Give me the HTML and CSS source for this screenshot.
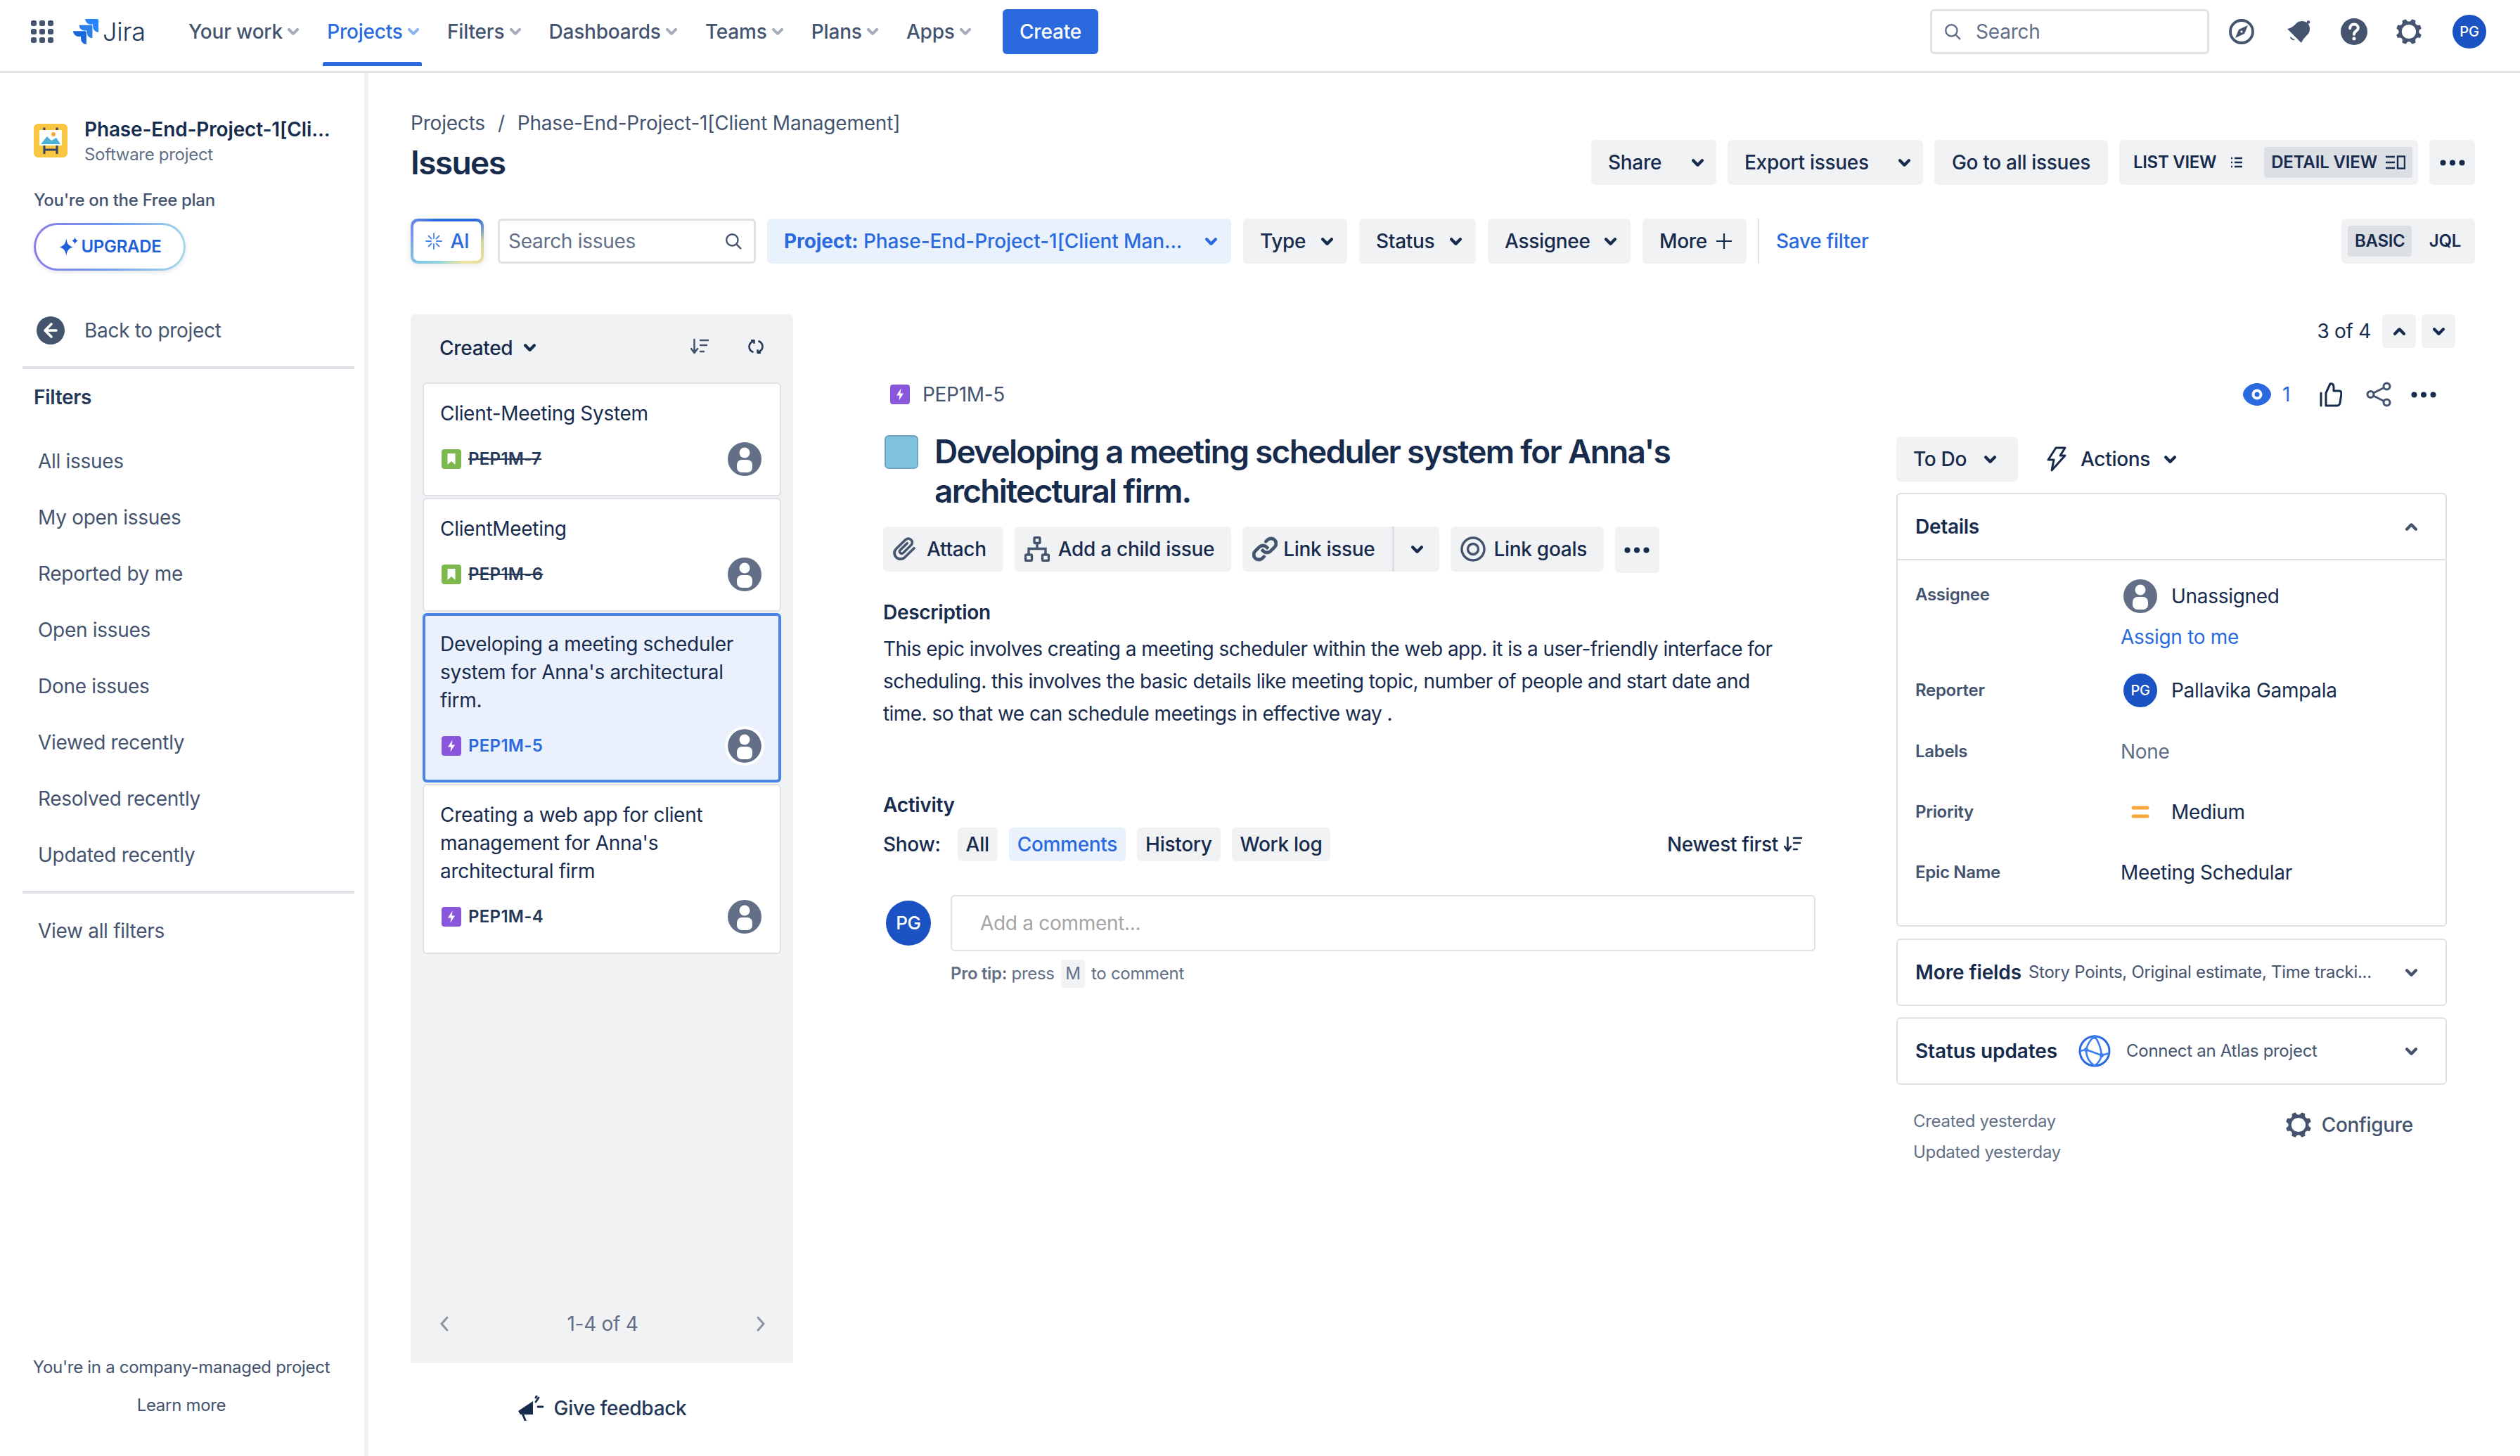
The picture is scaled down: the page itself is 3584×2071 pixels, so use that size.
FILE: index.html
```html
<html>

<head>
    <meta charset="UTF-8">
    <title>Issues - Jira</title>
    <link rel="stylesheet" href="styles.css">
</head>

<body>
    <svg class="defs" width="0" height="0">
        <symbol id="chev" viewBox="8 10 8 5"><path d="M8.292 10.293a1.009 1.009 0 000 1.419l2.939 2.965c.218.215.5.322.779.322s.556-.107.769-.322l2.93-2.955a1.01 1.01 0 000-1.419.987.987 0 00-1.406 0l-2.298 2.317-2.307-2.327a.99.99 0 00-1.406 0z" fill="currentColor"/></symbol>
        <symbol id="dots" viewBox="0 0 36 9"><circle cx="4.5" cy="4.5" r="4" fill="currentColor"/><circle cx="18" cy="4.5" r="4" fill="currentColor"/><circle cx="31.5" cy="4.5" r="4" fill="currentColor"/></symbol>
        <symbol id="person" viewBox="0 0 48 48"><circle cx="24" cy="24" r="24" fill="#626f86"/><circle cx="24" cy="15" r="7.5" fill="#fff"/><rect x="13" y="25" width="22" height="18" rx="7" fill="#fff"/></symbol>
        <symbol id="epic" viewBox="0 0 28 28"><rect width="28" height="28" rx="4" fill="#8a57dc"/><path d="M15.5 5.5 9 15.5h4.5l-1 7 6.5-10h-4.5z" fill="#fff"/></symbol>
        <symbol id="story" viewBox="0 0 28 28"><rect width="28" height="28" rx="4" fill="#7cb84d"/><path d="M8.5 6h11v16l-5.5-5-5.5 5z" fill="#fff"/></symbol>
        <symbol id="gear" viewBox="2.8 2.8 17.8 17.8"><path fill-rule="evenodd" d="M11.701 16.7a5.002 5.002 0 110-10.003 5.002 5.002 0 010 10.004m8.368-3.117a1.995 1.995 0 01-1.346-1.885c0-.876.563-1.613 1.345-1.885a.48.48 0 00.315-.574 8.947 8.947 0 00-.836-1.993.477.477 0 00-.598-.195 2.04 2.04 0 01-1.29.08 1.988 1.988 0 01-1.404-1.395 2.04 2.04 0 01.076-1.297.478.478 0 00-.196-.597 8.98 8.98 0 00-1.975-.826.479.479 0 00-.574.314 1.995 1.995 0 01-1.885 1.346 1.994 1.994 0 01-1.884-1.345.482.482 0 00-.575-.315c-.708.2-1.379.485-2.004.842a.47.47 0 00-.198.582A2.002 2.002 0 014.445 7.06a.478.478 0 00-.595.196 8.946 8.946 0 00-.833 1.994.48.48 0 00.308.572 1.995 1.995 0 011.323 1.877c0 .867-.552 1.599-1.324 1.877a.479.479 0 00-.308.57 8.99 8.99 0 00.723 1.79.477.477 0 00.624.194c.595-.273 1.343-.264 2.104.238.117.077.225.185.302.3.527.8.512 1.58.198 2.188a.473.473 0 00.168.628 8.946 8.946 0 002.11.897.474.474 0 00.57-.313 1.995 1.995 0 011.886-1.353c.878 0 1.618.567 1.887 1.353a.475.475 0 00.57.313 8.964 8.964 0 002.084-.883.473.473 0 00.167-.631c-.318-.608-.337-1.393.191-2.195.077-.116.185-.225.302-.302.772-.511 1.527-.513 2.125-.23a.477.477 0 00.628-.19 8.925 8.925 0 00.728-1.793.478.478 0 00-.314-.573" fill="currentColor"/></symbol>
        <symbol id="search" viewBox="0 0 24 24"><circle cx="10.5" cy="10.5" r="7.5" fill="none" stroke="currentColor" stroke-width="2.2"/><path d="M16 16l5.5 5.5" stroke="currentColor" stroke-width="2.2" stroke-linecap="round"/></symbol>
        <symbol id="sort" viewBox="0 0 26 24"><path d="M5.500 2v18M1 15l4.500 6 4.500-6" fill="none" stroke="currentColor" stroke-width="2.600" stroke-linecap="round" stroke-linejoin="round"/><path d="M14 3h12M14 10h9M14 19h5" stroke="currentColor" stroke-width="2.400" stroke-linecap="round"/></symbol>
    </svg>

    <header class="topbar">
        <svg class="app-grid" viewBox="0 0 32 32" width="32" height="32">
            <g fill="#44546f">
                <rect x="0" y="0" width="8" height="8" rx="2.500"/><rect x="12" y="0" width="8" height="8" rx="2.500"/><rect x="24" y="0" width="8" height="8" rx="2.500"/>
                <rect x="0" y="12" width="8" height="8" rx="2.500"/><rect x="12" y="12" width="8" height="8" rx="2.500"/><rect x="24" y="12" width="8" height="8" rx="2.500"/>
                <rect x="0" y="24" width="8" height="8" rx="2.500"/><rect x="12" y="24" width="8" height="8" rx="2.500"/><rect x="24" y="24" width="8" height="8" rx="2.500"/>
            </g>
        </svg>
        <div class="brand">
            <svg viewBox="0 0 24 24" width="36" height="36">
                <path fill="#1868db" d="M11.571 11.513H0a5.218 5.218 0 0 0 5.232 5.215h2.13v2.057A5.215 5.215 0 0 0 12.575 24V12.518a1.005 1.005 0 0 0-1.005-1.005z"/>
                <path fill="#2f7fe8" d="M17.294 5.757H5.736a5.215 5.215 0 0 0 5.215 5.214h2.129v2.058a5.218 5.218 0 0 0 5.215 5.214V6.758a1.001 1.001 0 0 0-1.001-1.001z"/>
                <path fill="#2684ff" d="M23.013 0H11.455a5.215 5.215 0 0 0 5.215 5.215h2.129v2.057A5.215 5.215 0 0 0 24 12.483V1.005A1.001 1.001 0 0 0 23.013 0z"/>
            </svg>
            <span>Jira</span>
        </div>
        <nav class="nav">
            <a class="nav-item">Your work <svg class="chev"><use href="#chev"/></svg></a>
            <a class="nav-item active">Projects <svg class="chev"><use href="#chev"/></svg></a>
            <a class="nav-item">Filters <svg class="chev"><use href="#chev"/></svg></a>
            <a class="nav-item">Dashboards <svg class="chev"><use href="#chev"/></svg></a>
            <a class="nav-item">Teams <svg class="chev"><use href="#chev"/></svg></a>
            <a class="nav-item">Plans <svg class="chev"><use href="#chev"/></svg></a>
            <a class="nav-item">Apps <svg class="chev"><use href="#chev"/></svg></a>
        </nav>
        <button class="create">Create</button>
        <div class="top-right">
            <div class="top-search">
                <svg class="ic-search"><use href="#search"/></svg>
                <span>Search</span>
            </div>
            <svg class="top-icon compass" viewBox="0 0 36 36" width="36" height="36">
                <circle cx="18" cy="18" r="16" fill="none" stroke="#44546f" stroke-width="3.800"/>
                <path d="M27 9 22 21 9 27 14 15z" fill="#44546f"/>
                <circle cx="18" cy="18" r="1.600" fill="#fff"/>
            </svg>
            <svg class="top-icon bell" viewBox="0 0 36 36" width="36" height="36">
                <g fill="#44546f">
                    <path d="M2 14C9 13 12 9 15 6 19 2 27 2 31 6c4 4 4 12 0 16-3 3-7 7-9 12z"/>
                    <path d="M6 25c0 3 3 6 7 5z"/>
                    <circle cx="32" cy="4.500" r="2.200"/>
                </g>
            </svg>
            <svg class="top-icon help" viewBox="0 0 36 36" width="38" height="38">
                <circle cx="18" cy="18" r="18" fill="#44546f"/>
                <path d="M12.500 13.500c0-3.500 2.500-5.500 5.500-5.500s5.500 2 5.500 5c0 4-5.500 4-5.500 8.500" fill="none" stroke="#fff" stroke-width="3.800" stroke-linecap="round"/>
                <circle cx="18" cy="27.500" r="2.400" fill="#fff"/>
            </svg>
            <svg class="top-gear"><use href="#gear"/></svg>
            <div class="avatar avatar-nav">PG</div>
        </div>
    </header>

    <div class="layout">
        <aside class="sidebar">
            <div class="project-head">
                <svg viewBox="0 0 48 48" width="48" height="48">
                    <rect width="48" height="48" rx="6" fill="#f9c642"/>
                    <path d="M15 5.500v4M33 5.500v4M15 31v12M33 31v12M15 37h18" stroke="#344563" stroke-width="3"/>
                    <rect x="8" y="9" width="32" height="22" rx="1" fill="#fff"/>
                    <path d="M10 29 19 18l6 6 7-4 6 9z" fill="#4db1d6"/>
                    <circle cx="28" cy="15" r="3" fill="#f5a83a"/>
                </svg>
                <div>
                    <div class="project-name">Phase-End-Project-1[Cli...</div>
                    <div class="project-type">Software project</div>
                </div>
            </div>
            <div class="plan">You're on the Free plan</div>
            <div class="upgrade">
                <div class="upgrade-inner">
                    <svg viewBox="0 0 28 28" width="30" height="30">
                        <path d="M10.500 3c1 7 3 9.500 9 11.500-6 2-8 4.500-9 11.500-1-7-3-9.500-9-11.500 6-2 8-4.500 9-11.500z" fill="#1f5fd8"/>
                        <path d="M22 1c.5 3 1.500 4 4 5-2.500 1-3.500 2-4 5-.5-3-1.500-4-4-5 2.500-1 3.500-2 4-5z" fill="#1f5fd8"/>
                    </svg>
                    UPGRADE
                </div>
            </div>
            <div class="back">
                <svg viewBox="0 0 40 40" width="40" height="40">
                    <circle cx="20" cy="20" r="20" fill="#44546f"/>
                    <path d="M21 11l-9 9 9 9M13 20h15" fill="none" stroke="#fff" stroke-width="3.600" stroke-linecap="round" stroke-linejoin="round"/>
                </svg>
                <span>Back to project</span>
            </div>
            <div class="side-rule"></div>
            <div class="side-title">Filters</div>
            <ul class="filters">
                <li>All issues</li>
                <li>My open issues</li>
                <li>Reported by me</li>
                <li>Open issues</li>
                <li>Done issues</li>
                <li>Viewed recently</li>
                <li>Resolved recently</li>
                <li>Updated recently</li>
            </ul>
            <div class="side-rule rule-low"></div>
            <div class="all-filters">View all filters</div>
            <div class="side-foot">
                <div>You're in a company-managed project</div>
                <div>Learn more</div>
            </div>
        </aside>

        <main class="main">
            <div class="crumbs">
                <span>Projects</span><span class="slash">/</span><span>Phase-End-Project-1[Client Management]</span>
            </div>
            <div class="title-row">
                <h1>Issues</h1>
                <div class="title-actions">
                    <button class="btn btn-split w-share"><span>Share</span><svg class="chev-dark"><use href="#chev"/></svg></button>
                    <button class="btn btn-split w-export"><span>Export issues</span><svg class="chev-dark"><use href="#chev"/></svg></button>
                    <button class="btn w-goto">Go to all issues</button>
                    <div class="btn view-switch">
                        <span class="view-opt">LIST VIEW
                            <svg viewBox="0 0 18 16" width="18" height="16"><path d="M1 2h2M6 2h11M1 8h2M6 8h11M1 14h2M6 14h11" stroke="#172b4d" stroke-width="2.400"/></svg>
                        </span>
                        <span class="view-opt on">DETAIL VIEW
                            <svg viewBox="0 0 28 20" width="28" height="20"><path d="M0 2h13M0 10h13M0 18h13" stroke="#172b4d" stroke-width="2.400"/><rect x="17" y="1.500" width="10" height="17" fill="none" stroke="#172b4d" stroke-width="2.400"/></svg>
                        </span>
                    </div>
                    <button class="btn btn-dots"><svg class="dots"><use href="#dots"/></svg></button>
                </div>
            </div>

            <div class="filter-bar">
                <div class="ai-btn">
                    <div class="ai-inner">
                        <svg viewBox="0 0 24 24" width="24" height="24">
                            <path d="M12 1v7M12 16v7M1 12h7M16 12h7M4.500 4.500l4 4M15.500 15.500l4 4M19.500 4.500l-4 4M8.500 15.500l-4 4" stroke="#4a86e8" stroke-width="1.800" stroke-linecap="round"/>
                        </svg>
                        AI
                    </div>
                </div>
                <div class="issue-search">
                    <span>Search issues</span>
                    <svg class="ic-search dark"><use href="#search"/></svg>
                </div>
                <button class="btn chip-project"><span><b>Project:</b> Phase-End-Project-1[Client Man...</span><svg class="chev-blue"><use href="#chev"/></svg></button>
                <button class="btn chip w-type">Type <svg class="chev-dark"><use href="#chev"/></svg></button>
                <button class="btn chip w-status">Status <svg class="chev-dark"><use href="#chev"/></svg></button>
                <button class="btn chip w-assignee">Assignee <svg class="chev-dark"><use href="#chev"/></svg></button>
                <button class="btn chip w-more">More
                    <svg viewBox="0 0 24 24" width="24" height="24"><path d="M12 1v22M1 12h22" stroke="#172b4d" stroke-width="2.200"/></svg>
                </button>
                <div class="bar-rule"></div>
                <a class="save-filter">Save filter</a>
                <div class="btn mode-switch">
                    <span class="mode on">BASIC</span>
                    <span class="mode">JQL</span>
                </div>
            </div>

            <div class="content">
                <div class="list-col">
                    <section class="panel">
                        <div class="panel-head">
                            <span class="created">Created <svg class="chev-dark"><use href="#chev"/></svg></span>
                            <div class="panel-tools">
                                <svg class="ic-sort"><use href="#sort"/></svg>
                                <svg viewBox="0 0 22 20" width="22" height="20">
                                    <g fill="none" stroke="#253858" stroke-width="2.600" stroke-linejoin="round">
                                        <path d="M7.500 18C3.500 16.500 1.500 13.500 1.500 10S3.500 4 7.500 2.500"/>
                                        <path d="M4 1.300h4.500v4.500"/>
                                        <path d="M14.500 2C18.500 3.500 20.500 6.500 20.500 10S18.500 16 14.500 17.500"/>
                                        <path d="M18 18.700h-4.500v-4.500"/>
                                    </g>
                                </svg>
                            </div>
                        </div>
                        <article class="card">
                            <div class="card-title">Client-Meeting System</div>
                            <div class="card-foot">
                                <svg class="type-ic"><use href="#story"/></svg>
                                <span class="key done">PEP1M-7</span>
                                <svg class="person"><use href="#person"/></svg>
                            </div>
                        </article>
                        <article class="card">
                            <div class="card-title">ClientMeeting</div>
                            <div class="card-foot">
                                <svg class="type-ic"><use href="#story"/></svg>
                                <span class="key done">PEP1M-6</span>
                                <svg class="person"><use href="#person"/></svg>
                            </div>
                        </article>
                        <article class="card selected">
                            <div class="card-title">Developing a meeting scheduler system for Anna's architectural firm.</div>
                            <div class="card-foot">
                                <svg class="type-ic"><use href="#epic"/></svg>
                                <span class="key">PEP1M-5</span>
                                <svg class="person"><use href="#person"/></svg>
                            </div>
                        </article>
                        <article class="card">
                            <div class="card-title">Creating a web app for client management for Anna's architectural firm</div>
                            <div class="card-foot">
                                <svg class="type-ic"><use href="#epic"/></svg>
                                <span class="key">PEP1M-4</span>
                                <svg class="person"><use href="#person"/></svg>
                            </div>
                        </article>
                        <div class="panel-foot">
                            <svg viewBox="0 0 14 24" width="14" height="24"><path d="M11 3 3 12l8 9" fill="none" stroke="#8993a4" stroke-width="3" stroke-linecap="round" stroke-linejoin="round"/></svg>
                            <span>1-4 of 4</span>
                            <svg viewBox="0 0 14 24" width="14" height="24"><path d="M3 3l8 9-8 9" fill="none" stroke="#8993a4" stroke-width="3" stroke-linecap="round" stroke-linejoin="round"/></svg>
                        </div>
                    </section>
                    <div class="feedback">
                        <svg viewBox="0 0 38 36" width="38" height="36">
                            <path d="M1 22 22 8v19L4 27z" fill="#172b4d"/>
                            <path d="M8 28l3 7" stroke="#172b4d" stroke-width="3" stroke-linecap="round"/>
                            <path d="M26 9l4-6M29 16h7M26 3l1-2" stroke="#172b4d" stroke-width="2.800" stroke-linecap="round"/>
                        </svg>
                        Give feedback
                    </div>
                </div>

                <div class="detail">
                    <div class="pager">
                        <span>3 of 4</span>
                        <button class="btn btn-square"><svg class="chev-dark up"><use href="#chev"/></svg></button>
                        <button class="btn btn-square"><svg class="chev-dark"><use href="#chev"/></svg></button>
                    </div>
                    <div class="detail-grid">
                        <div class="issue">
                            <div class="issue-key">
                                <svg class="type-ic"><use href="#epic"/></svg>
                                PEP1M-5
                            </div>
                            <div class="issue-title">
                                <div class="swatch"></div>
                                <h2>Developing a meeting scheduler system for Anna's architectural firm.</h2>
                            </div>
                            <div class="issue-actions">
                                <button class="btn act act-attach">
                                    <svg viewBox="3.500 2.500 17.500 19.500" width="34" height="36"><path d="M11.643 17.965c-1.53 1.495-4.016 1.496-5.542.004a3.773 3.773 0 01.002-5.412l7.147-6.985a2.316 2.316 0 013.233-.003c.893.873.895 2.282.004 3.153l-6.086 5.948a.866.866 0 01-1.2 0 .81.81 0 01-.001-1.164l5.356-5.235a.757.757 0 00.005-1.089.8.8 0 00-1.112-.005l-5.356 5.234a2.33 2.33 0 00.001 3.339 2.396 2.396 0 003.323 0l6.086-5.947a3.67 3.67 0 00-.004-5.263 3.868 3.868 0 00-5.394.003l-7.147 6.985a5.3 5.3 0 00-.002 7.599c2.131 2.083 5.6 2.082 7.737-.005l7.147-6.985a.757.757 0 00.001-1.092.8.8 0 00-1.113.003l-7.146 6.985z" fill="#44546f" stroke="#44546f" stroke-width=".5"/></svg>
                                    Attach
                                </button>
                                <button class="btn act act-child">
                                    <svg viewBox="0 0 36 36" width="36" height="36">
                                        <rect x="14" y="1.500" width="8" height="8" rx="1.500" fill="none" stroke="#44546f" stroke-width="3.400"/>
                                        <rect x="1.500" y="26" width="9" height="8.500" rx="1.500" fill="none" stroke="#44546f" stroke-width="3.400"/>
                                        <rect x="25.500" y="26" width="9" height="8.500" rx="1.500" fill="none" stroke="#44546f" stroke-width="3.400"/>
                                        <path d="M18 9.500v8M6 26v-8.500h24V26" fill="none" stroke="#44546f" stroke-width="3.400"/>
                                    </svg>
                                    Add a child issue
                                </button>
                                <div class="btn act act-link">
                                    <svg viewBox="3 3.500 18 18" width="36" height="36"><g fill="#44546f" stroke="#44546f" stroke-width=".4"><path d="M12.856 5.457l-.937.92a1.002 1.002 0 000 1.437 1.047 1.047 0 001.463 0l.984-.966c.967-.95 2.542-1.135 3.602-.288a2.54 2.54 0 01.203 3.81l-2.903 2.852a2.646 2.646 0 01-3.696 0l-1.11-1.09L9 13.57l1.108 1.089c1.822 1.788 4.802 1.788 6.622 0l2.905-2.852a4.558 4.558 0 00-.357-6.82c-1.893-1.517-4.695-1.226-6.422.47"/><path d="M11.144 19.543l.937-.92a1.002 1.002 0 000-1.437 1.047 1.047 0 00-1.462 0l-.985.966c-.967.95-2.542 1.135-3.602.288a2.54 2.54 0 01-.203-3.81l2.903-2.852a2.646 2.646 0 013.696 0l1.11 1.09L15 11.43l-1.108-1.089c-1.822-1.788-4.802-1.788-6.622 0l-2.905 2.852a4.558 4.558 0 00.357 6.82c1.893 1.517 4.695 1.226 6.422-.47"/></g></svg>
                                    <span>Link issue</span>
                                    <i class="act-rule"></i>
                                    <svg class="chev-dark"><use href="#chev"/></svg>
                                </div>
                                <button class="btn act act-goals">
                                    <svg viewBox="0 0 36 36" width="36" height="36"><circle cx="18" cy="18" r="16" fill="none" stroke="#44546f" stroke-width="3.400"/><circle cx="18" cy="18" r="7.500" fill="none" stroke="#44546f" stroke-width="3.400"/></svg>
                                    Link goals
                                </button>
                                <button class="btn act act-more"><svg class="dots"><use href="#dots"/></svg></button>
                            </div>
                            <h3 class="section-head">Description</h3>
                            <p class="desc">This epic involves creating a meeting scheduler within the web app. it is a user-friendly interface for scheduling. this involves the basic details like meeting topic, number of people and start date and time. so that we can schedule meetings in effective way .</p>
                            <h3 class="section-head activity-head">Activity</h3>
                            <div class="activity-tabs">
                                <span class="show">Show:</span>
                                <button class="tab">All</button>
                                <button class="tab on">Comments</button>
                                <button class="tab">History</button>
                                <button class="tab">Work log</button>
                                <span class="newest">Newest first <svg class="ic-sort small"><use href="#sort"/></svg></span>
                            </div>
                            <div class="comment-row">
                                <div class="avatar avatar-comment">PG</div>
                                <div class="comment-box">Add a comment...</div>
                            </div>
                            <div class="pro-tip"><b>Pro tip:</b> press <kbd>M</kbd> to comment</div>
                        </div>

                        <div class="side">
                            <div class="side-icons">
                                <svg viewBox="0 0 40 32" width="40" height="32">
                                    <path d="M20 0c11 0 20 9 20 16s-9 16-20 16S0 23 0 16 9 0 20 0z" fill="#2a6ade"/>
                                    <circle cx="20" cy="16" r="7.500" fill="#fff"/>
                                    <circle cx="20" cy="16" r="3.500" fill="#2a6ade"/>
                                </svg>
                                <span class="watch-count">1</span>
                                <svg class="thumb" viewBox="0 0 32 36" width="32" height="36">
                                    <path d="M9 16 15 3c3-1 5 1 5 4v6h8c2 0 3 2 3 4l-2 13c0 2-2 4-4 4H9z" fill="none" stroke="#172b4d" stroke-width="3" stroke-linejoin="round"/>
                                    <path d="M2 16v18" stroke="#172b4d" stroke-width="3" stroke-linecap="round"/>
                                </svg>
                                <svg class="share" viewBox="0 0 36 36" width="36" height="36">
                                    <circle cx="6.500" cy="18" r="4.500" fill="none" stroke="#44546f" stroke-width="3"/>
                                    <circle cx="29.500" cy="6.500" r="4.500" fill="none" stroke="#44546f" stroke-width="3"/>
                                    <circle cx="29.500" cy="29.500" r="4.500" fill="none" stroke="#44546f" stroke-width="3"/>
                                    <path d="M10.500 16 25.500 8.500M10.500 20l15 7.500" stroke="#44546f" stroke-width="3"/>
                                </svg>
                                <svg class="dots"><use href="#dots"/></svg>
                            </div>
                            <div class="status-row">
                                <button class="btn todo">To Do <svg class="chev-dark"><use href="#chev"/></svg></button>
                                <div class="actions-menu">
                                    <svg viewBox="0 0 28 36" width="28" height="36"><path d="M13 2h13l-7 11h7L7 34l3-15H2z" fill="none" stroke="#172b4d" stroke-width="3" stroke-linejoin="round"/></svg>
                                    Actions <svg class="chev-dark"><use href="#chev"/></svg>
                                </div>
                            </div>
                            <div class="box details">
                                <div class="box-head">
                                    <span>Details</span>
                                    <svg class="chev-grey up"><use href="#chev"/></svg>
                                </div>
                                <div class="box-body">
                                    <div class="field field-assignee">
                                        <div class="field-label">Assignee</div>
                                        <div>
                                            <div class="field-value"><svg class="person"><use href="#person"/></svg>Unassigned</div>
                                            <a class="assign">Assign to me</a>
                                        </div>
                                    </div>
                                    <div class="field field-reporter">
                                        <div class="field-label">Reporter</div>
                                        <div class="field-value"><div class="avatar avatar-field">PG</div>Pallavika Gampala</div>
                                    </div>
                                    <div class="field">
                                        <div class="field-label">Labels</div>
                                        <div class="field-value muted">None</div>
                                    </div>
                                    <div class="field">
                                        <div class="field-label">Priority</div>
                                        <div class="field-value">
                                            <svg class="priority" viewBox="0 0 48 48" width="48" height="48"><path d="M14 18h20M14 30h20" stroke="#f5a83a" stroke-width="5" stroke-linecap="round"/></svg>
                                            Medium
                                        </div>
                                    </div>
                                    <div class="field">
                                        <div class="field-label">Epic Name</div>
                                        <div class="field-value">Meeting Schedular</div>
                                    </div>
                                </div>
                            </div>
                            <div class="box box-row">
                                <b>More fields</b>
                                <span class="box-note">Story Points, Original estimate, Time tracki...</span>
                                <svg class="chev-grey"><use href="#chev"/></svg>
                            </div>
                            <div class="box box-row box-status">
                                <b>Status updates</b>
                                <svg class="atlas" viewBox="0 0 46 46" width="46" height="46">
                                    <circle cx="23" cy="23" r="21" fill="none" stroke="#2a6ade" stroke-width="3"/>
                                    <g fill="none" stroke="#3b7ff0" stroke-width="2.600">
                                        <path d="M23 2Q14 9 11 21L2 23M23 2Q31 12 33 29L44 26M11 21 33 29M11 21Q11 36 23 44M33 29Q31 38 23 44"/>
                                    </g>
                                    <circle cx="23" cy="3" r="3" fill="#3b7ff0"/>
                                    <circle cx="11" cy="21" r="3" fill="#3b7ff0"/>
                                    <circle cx="33" cy="29" r="3" fill="#3b7ff0"/>
                                </svg>
                                <span class="box-note">Connect an Atlas project</span>
                                <svg class="chev-grey"><use href="#chev"/></svg>
                            </div>
                            <div class="meta">
                                <div class="dates">
                                    <div>Created yesterday</div>
                                    <div>Updated yesterday</div>
                                </div>
                                <div class="configure"><svg class="cfg-gear"><use href="#gear"/></svg>Configure</div>
                            </div>
                        </div>
                    </div>
                </div>
            </div>
        </main>
    </div>
</body>

</html>
```

FILE: styles.css
```css
* {
    box-sizing: border-box;
}

html,
body {
    margin: 0;
    height: 100%;
    overflow: hidden;
}

body {
    background-color: #fff;
    color: #172b4d;
    font-family: "Inter", "Liberation Sans", sans-serif;
    font-size: 28px;
    line-height: 40px;
    letter-spacing: -0.3px;
}

button {
    font: inherit;
    color: inherit;
    letter-spacing: inherit;
    border: 0;
}

h1,
h2,
h3,
p,
ul {
    margin: 0;
    padding: 0;
}

.defs {
    display: block;
    height: 0;
}

/* top bar */

.topbar {
    display: flex;
    align-items: center;
    height: 104px;
    padding-left: 44px;
    padding-bottom: 11px;
    border-bottom: 3px solid #dfe1e6;
    letter-spacing: -0.2px;
}

.app-grid {
    flex: none;
}

.brand {
    display: flex;
    align-items: center;
    margin-left: 28px;
    width: 158px;
    gap: 6px;
    font-size: 36px;
    font-weight: 300;
    color: #253858;
}

.nav {
    display: flex;
    gap: 30px;
    height: 88px;
}

.nav-item {
    display: flex;
    align-items: center;
    gap: 8px;
    padding: 0 4px 0 6px;
    color: #44546f;
    font-weight: 500;
    white-space: pre;
    position: relative;
}

.nav-item .chev {
    margin-left: -8px;
}

.nav-item.active {
    color: #2a6ade;
}

.nav-item.active::after {
    content: "";
    position: absolute;
    left: 0;
    right: 0;
    bottom: -5px;
    height: 6px;
    background-color: #2a6ade;
    border-radius: 3px 3px 0 0;
}

.chev {
    width: 16px;
    height: 10px;
    color: #a5adba;
}

.nav-item.active .chev {
    color: #8db3ee;
}

.chev-dark {
    width: 17px;
    height: 11px;
    color: #172b4d;
    flex: none;
}

.chev-blue {
    width: 17px;
    height: 11px;
    color: #2a6ade;
}

.chev-grey {
    width: 17px;
    height: 11px;
    color: #44546f;
    flex: none;
}

.up {
    transform: rotate(180deg);
}

.create {
    width: 136px;
    height: 64px;
    margin-left: 41px;
    background-color: #2a6ade;
    color: #fff;
    font-weight: 500;
    border-radius: 6px;
}

.top-right {
    display: flex;
    align-items: center;
    margin-left: auto;
    padding-right: 48px;
}

.top-search {
    display: flex;
    align-items: center;
    gap: 20px;
    width: 397px;
    height: 64px;
    padding-left: 16px;
    border: 3px solid #dfe1e6;
    border-radius: 6px;
    color: #626f86;
}

.ic-search {
    width: 26px;
    height: 26px;
    color: #626f86;
}

.top-icon {
    margin-left: 44px;
    flex: none;
}

.top-icon.compass {
    margin-left: 28px;
}

.top-icon.bell {
    margin-left: 45px;
}

.top-icon.help {
    margin-left: 42px;
}

.top-gear {
    width: 36px;
    height: 36px;
    margin-left: 41px;
    color: #44546f;
}

.avatar {
    display: flex;
    align-items: center;
    justify-content: center;
    border-radius: 50%;
    background-color: #1c53c4;
    color: #fff;
    font-weight: 500;
    flex: none;
}

.avatar-nav {
    width: 48px;
    height: 48px;
    margin-left: 44px;
    font-size: 20px;
}

/* layout */

.layout {
    display: flex;
    height: 1967px;
}

.sidebar {
    display: flex;
    flex-direction: column;
    width: 524px;
    flex: none;
    border-right: 6px solid #f1f2f4;
}

.project-head {
    display: flex;
    gap: 24px;
    align-items: center;
    padding: 60px 0 0 48px;
}

.project-name {
    font-weight: 600;
    line-height: 40px;
    white-space: nowrap;
    letter-spacing: -0.15px;
}

.project-type {
    font-size: 24px;
    line-height: 32px;
    color: #626f86;
}

.plan {
    margin: 33px 0 0 48px;
    font-size: 24px;
    line-height: 32px;
    font-weight: 500;
    color: #44546f;
}

.upgrade {
    width: 216px;
    height: 68px;
    margin: 16px 0 0 48px;
    padding: 3px;
    border-radius: 34px;
    background: linear-gradient(100deg, #8b7be8, #6f9bf0 50%, #a9dbe8);
    box-shadow: 0 2px 6px rgba(23, 43, 77, 0.12);
}

.upgrade-inner {
    display: flex;
    align-items: center;
    justify-content: center;
    gap: 3px;
    height: 100%;
    background-color: #fff;
    border-radius: 31px;
    color: #1f5fd8;
    font-size: 24px;
    font-weight: 600;
}

.back {
    display: flex;
    align-items: center;
    gap: 28px;
    margin: 65px 0 0 52px;
    color: #44546f;
}

.side-rule {
    height: 4px;
    margin: 31px 14px 0 32px;
    background-color: #dfe1e6;
}

.rule-low {
    margin-top: 31px;
}

.side-title {
    margin: 20px 0 0 48px;
    font-weight: 600;
    color: #253858;
}

.filters {
    list-style: none;
    margin: 51px 0 0 54px;
    color: #44546f;
}

.filters li {
    height: 80px;
    line-height: 40px;
}

.filters li:last-child {
    height: 40px;
}

.all-filters {
    margin: 33px 0 0 54px;
    color: #44546f;
}

.side-foot {
    margin-top: auto;
    padding-bottom: 45px;
    text-align: center;
    font-size: 24px;
    line-height: 54px;
    color: #44546f;
    padding-right: 2px;
}

.main {
    flex: 1;
    padding: 51px 64px 0 60px;
    min-width: 0;
}

.crumbs {
    display: flex;
    color: #44546f;
    letter-spacing: -0.2px;
}

.slash {
    margin: 0 18px;
}

.title-row {
    display: flex;
    align-items: center;
    justify-content: space-between;
    height: 64px;
    margin-top: 4px;
}

h1 {
    font-size: 46px;
    line-height: 56px;
    font-weight: 600;
    letter-spacing: -1.6px;
}

.title-actions {
    display: flex;
    gap: 16px;
}

.btn {
    display: flex;
    align-items: center;
    height: 64px;
    background-color: #f1f2f4;
    border-radius: 6px;
    font-weight: 500;
    white-space: nowrap;
}

.btn-split {
    justify-content: space-between;
    padding: 0 18px 0 24px;
}

.w-share {
    width: 178px;
}

.w-export {
    width: 278px;
}

.w-goto {
    width: 247px;
    justify-content: center;
}

.view-switch {
    width: 425px;
    padding: 0 8px 0 20px;
    justify-content: space-between;
}

.view-opt {
    display: flex;
    align-items: center;
    gap: 20px;
    font-size: 24px;
    font-weight: 600;
}

.view-opt.on {
    gap: 12px;
    height: 44px;
    padding: 0 10px;
    margin-left: -8px;
    background-color: #dcdfe4;
    border-radius: 4px;
    letter-spacing: -0.15px;
}

.btn-dots {
    width: 65px;
    justify-content: center;
}

.dots {
    width: 36px;
    height: 9px;
    color: #172b4d;
}

/* filter row */

.filter-bar {
    display: flex;
    align-items: center;
    height: 64px;
    margin-top: 48px;
}

.ai-btn {
    width: 104px;
    height: 64px;
    padding: 4px;
    border-radius: 10px;
    background: conic-gradient(from 0deg at 50% 50%, #2a6ade 0 15%, #cfd4a0 25%, #f2e39a 38%, #8fd6d8 55%, #80c8e0 65%, #7a8ee8 80%, #2a6ade 92%);
    box-shadow: 0 2px 8px rgba(23, 43, 77, 0.12);
}

.ai-inner {
    display: flex;
    align-items: center;
    justify-content: center;
    gap: 12px;
    height: 100%;
    background-color: #fff;
    border-radius: 7px;
    color: #2a6ade;
    font-weight: 500;
}

.issue-search {
    display: flex;
    align-items: center;
    justify-content: space-between;
    width: 367px;
    height: 64px;
    margin-left: 20px;
    padding: 0 16px 0 12px;
    border: 3px solid #dfe1e6;
    border-radius: 6px;
    color: #626f86;
}

.ic-search.dark {
    color: #44546f;
}

.chip-project {
    width: 660px;
    margin-left: 16px;
    padding: 0 20px 0 24px;
    background-color: #e9f1fd;
    color: #2a6ade;
    justify-content: space-between;
    letter-spacing: -0.1px;
}

.chip-project b {
    font-weight: 700;
}

.chip {
    margin-left: 17px;
    padding: 0 20px 0 24px;
    justify-content: space-between;
}

.w-type {
    width: 148px;
}

.w-status {
    width: 166px;
}

.w-assignee {
    width: 203px;
}

.w-more {
    width: 148px;
}

.bar-rule {
    width: 2px;
    height: 64px;
    margin-left: 16px;
    background-color: #dfe1e6;
}

.save-filter {
    margin-left: 24px;
    color: #2a6ade;
    font-weight: 500;
}

.mode-switch {
    margin-left: auto;
    width: 190px;
    padding: 0 20px 0 9px;
    justify-content: space-between;
    font-size: 24px;
    font-weight: 600;
}

.mode {
    line-height: 44px;
}

.mode.on {
    padding: 0 10px;
    background-color: #dcdfe4;
    border-radius: 4px;
}

/* issue list */

.content {
    display: flex;
    margin-top: 72px;
}

.list-col {
    width: 544px;
    flex: none;
}

.panel {
    display: flex;
    flex-direction: column;
    gap: 2px;
    height: 1492px;
    padding: 0 17px;
    background-color: #f1f2f4;
    border-radius: 6px 6px 0 0;
}

.panel-head {
    display: flex;
    align-items: center;
    justify-content: space-between;
    height: 95px;
    padding: 0 25px 0 24px;
    flex: none;
}

.created {
    display: flex;
    align-items: center;
    gap: 16px;
    font-weight: 500;
}

.panel-tools {
    display: flex;
    align-items: center;
    gap: 56px;
    color: #44546f;
    margin-top: -4px;
}

.ic-sort {
    width: 26px;
    height: 24px;
    color: #44546f;
}

.card {
    padding: 22px 26px 27px 23px;
    background-color: #fff;
    border: 2px solid #dfe1e6;
    border-radius: 6px;
    flex: none;
}

.card.selected {
    background-color: #eaf1fd;
    border: 4px solid #4a84e6;
    padding: 20px 20px 24px 21px;
}

.card-foot {
    display: flex;
    align-items: center;
    margin-top: 21px;
}

.card .type-ic {
    margin-left: 2px;
}

.type-ic {
    width: 28px;
    height: 28px;
    flex: none;
}

.key {
    margin-left: 10px;
    font-size: 24px;
    font-weight: 600;
    letter-spacing: 0.3px;
    color: #253858;
}

.key.done {
    text-decoration: line-through;
}

.selected .key {
    color: #2a6ade;
}

.person {
    width: 48px;
    height: 48px;
    margin-left: auto;
    flex: none;
}

.selected .person {
    border-radius: 50%;
    box-shadow: 0 0 0 4px #fff;
    margin-right: 4px;
}

.panel-foot {
    display: flex;
    align-items: center;
    justify-content: space-between;
    height: 112px;
    margin-top: auto;
    padding: 0 22px 0 24px;
    color: #626f86;
}

.feedback {
    display: flex;
    align-items: center;
    justify-content: center;
    gap: 14px;
    height: 128px;
    font-weight: 500;
    color: #253858;
}

/* issue detail */

.detail {
    flex: 1;
    min-width: 0;
}

.pager {
    display: flex;
    align-items: center;
    justify-content: flex-end;
    gap: 8px;
    padding-right: 28px;
}

.pager span {
    margin-right: 8px;
}

.btn-square {
    width: 48px;
    height: 48px;
    justify-content: center;
}

.detail-grid {
    display: grid;
    grid-template-columns: 1326px 783px;
    gap: 115px;
    margin: 46px 0 0 128px;
}

.issue-key {
    display: flex;
    align-items: center;
    gap: 18px;
    margin-left: 10px;
    color: #44546f;
}

.issue-title {
    display: flex;
    align-items: flex-start;
    gap: 23px;
    margin-top: 33px;
    margin-left: 2px;
}

.swatch {
    width: 48px;
    height: 48px;
    margin-top: 5px;
    background-color: #7fc1de;
    border: 2px solid #6ba7c4;
    border-radius: 6px;
    flex: none;
}

h2 {
    width: 1150px;
    font-size: 46px;
    line-height: 56px;
    font-weight: 600;
    letter-spacing: -1.75px;
}

.issue-actions {
    display: flex;
    align-items: flex-start;
    gap: 16px;
    margin-top: 23px;
}

.act {
    padding: 0 24px 0 14px;
    gap: 12px;
}

.act-attach {
    gap: 14px;
}

.act-link {
    padding-right: 0;
    gap: 8px;
}

.act-rule {
    width: 3px;
    height: 64px;
    margin-left: 16px;
    background-color: #dcdfe4;
}

.act-link .chev-dark {
    margin: 0 23px 0 16px;
}

.act-more {
    width: 63px;
    height: 66px;
    padding: 0;
    justify-content: center;
}

.section-head {
    margin-top: 36px;
    font-size: 28px;
    font-weight: 600;
}

.desc {
    width: 1290px;
    margin-top: 9px;
    line-height: 46px;
    letter-spacing: -0.55px;
}

.activity-head {
    margin-top: 87px;
}

.activity-tabs {
    display: flex;
    align-items: center;
    gap: 16px;
    margin-top: 12px;
    padding-right: 19px;
}

.show {
    margin-right: 8px;
    font-weight: 500;
}

.tab {
    height: 48px;
    padding: 0 12px;
    background-color: #f1f2f4;
    border-radius: 6px;
    font-weight: 500;
}

.tab.on {
    background-color: #e9f1fd;
    color: #2a6ade;
}

.newest {
    display: flex;
    align-items: center;
    gap: 8px;
    margin-left: auto;
    font-weight: 500;
}

.ic-sort.small {
    color: #172b4d;
}

.comment-row {
    display: flex;
    align-items: center;
    gap: 28px;
    margin-top: 48px;
    margin-left: 4px;
}

.avatar-comment {
    width: 64px;
    height: 64px;
    font-size: 26px;
}

.comment-box {
    flex: 1;
    height: 80px;
    padding-left: 40px;
    line-height: 76px;
    border: 2px solid #dfe1e6;
    border-radius: 6px;
    color: #a5a5a5;
}

.pro-tip {
    margin: 12px 0 0 96px;
    font-size: 24px;
    color: #626f86;
}

.pro-tip b {
    font-weight: 600;
}

kbd {
    display: inline-block;
    padding: 0 6px;
    margin: 0 3px;
    font-family: inherit;
    font-size: 24px;
    background-color: #f1f2f4;
    border-radius: 4px;
}

/* right column */

.side-icons {
    display: flex;
    align-items: center;
    justify-content: flex-end;
    height: 40px;
    padding-right: 15px;
}

.watch-count {
    margin: 0 42px 0 16px;
    color: #2a6ade;
}

.share {
    margin: 0 28px 0 34px;
}

.side-icons .thumb {
    flex: none;
}

.status-row {
    display: flex;
    align-items: center;
    margin-top: 40px;
}

.todo {
    width: 173px;
    padding: 0 31px 0 24px;
    justify-content: space-between;
}

.actions-menu {
    display: flex;
    align-items: center;
    gap: 20px;
    margin-left: 41px;
    font-weight: 500;
}

.box {
    margin-top: 16px;
    border: 2px solid #dfe1e6;
    border-radius: 6px;
}

.box-head {
    display: flex;
    align-items: center;
    justify-content: space-between;
    height: 94px;
    padding: 0 40px 0 25px;
    font-weight: 600;
    border-bottom: 2px solid #dfe1e6;
}

.box-body {
    height: 519px;
    padding: 27px 25px 0;
}

.field {
    display: grid;
    grid-template-columns: 292px 1fr;
    margin-bottom: 38px;
    align-items: start;
}

.field-assignee {
    margin-bottom: 32px;
}

.field-reporter {
    margin-bottom: 39px;
}

.field-label {
    font-size: 24px;
    line-height: 48px;
    font-weight: 600;
    color: #44546f;
}

.field-assignee .field-label {
    line-height: 44px;
}

.field-value {
    display: flex;
    align-items: center;
    gap: 20px;
    min-height: 48px;
}

.field-value .person,
.avatar-field {
    width: 48px;
    height: 48px;
    margin: 0 0 0 4px;
}

.priority {
    margin-left: 4px;
}

.avatar-field {
    font-size: 20px;
}

.muted {
    color: #626f86;
}

.assign {
    display: block;
    margin-top: 14px;
    color: #2a6ade;
}

.box-row {
    display: flex;
    align-items: center;
    height: 96px;
    padding: 0 40px 0 25px;
    margin-top: 17px;
}

.box-row b {
    font-weight: 600;
    white-space: nowrap;
    letter-spacing: -0.1px;
}

.box-note {
    margin-left: 10px;
    font-size: 24px;
    color: #44546f;
    white-space: nowrap;
}

.box-row .chev-grey {
    margin-left: auto;
}

.box-status {
    margin-top: 16px;
}

.atlas {
    margin-left: 30px;
    flex: none;
}

.box-status .box-note {
    margin-left: 22px;
}

.meta {
    display: flex;
    justify-content: space-between;
    margin-top: 30px;
    padding: 0 48px 0 24px;
}

.dates {
    font-size: 24px;
    line-height: 44px;
    color: #626f86;
}

.configure {
    display: flex;
    align-items: center;
    gap: 15px;
    height: 54px;
    color: #44546f;
    font-weight: 500;
}

.cfg-gear {
    width: 36px;
    height: 36px;
    color: #44546f;
}
```
